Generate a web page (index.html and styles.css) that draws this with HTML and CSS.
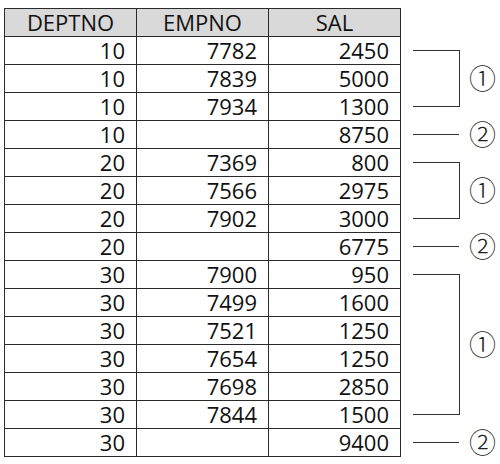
FILE: index.html
```html
<!DOCTYPE html>
<html lang="ko">
<head>
<meta charset="utf-8">
<link rel="stylesheet" href="styles.css">
</head>
<body>
<div class="wrap">
  <table class="data">
    <thead>
      <tr><th>DEPTNO</th><th>EMPNO</th><th>SAL</th></tr>
    </thead>
    <tbody>
      <tr><td>10</td><td>7782</td><td>2450</td></tr>
      <tr><td>10</td><td>7839</td><td>5000</td></tr>
      <tr><td>10</td><td>7934</td><td>1300</td></tr>
      <tr><td>10</td><td></td><td>8750</td></tr>
      <tr><td>20</td><td>7369</td><td>800</td></tr>
      <tr><td>20</td><td>7566</td><td>2975</td></tr>
      <tr><td>20</td><td>7902</td><td>3000</td></tr>
      <tr><td>20</td><td></td><td>6775</td></tr>
      <tr><td>30</td><td>7900</td><td>950</td></tr>
      <tr><td>30</td><td>7499</td><td>1600</td></tr>
      <tr><td>30</td><td>7521</td><td>1250</td></tr>
      <tr><td>30</td><td>7654</td><td>1250</td></tr>
      <tr><td>30</td><td>7698</td><td>2850</td></tr>
      <tr><td>30</td><td>7844</td><td>1500</td></tr>
      <tr><td>30</td><td></td><td>9400</td></tr>
    </tbody>
  </table>
  <div class="notes">
    <div class="bracket g1"></div><div class="mark g1">①</div>
    <div class="line r4"></div><div class="mark r4">②</div>
    <div class="bracket g2"></div><div class="mark g2">①</div>
    <div class="line r8"></div><div class="mark r8">②</div>
    <div class="bracket g3"></div><div class="mark g3">①</div>
    <div class="line r15"></div><div class="mark r15">②</div>
  </div>
</div>
</body>
</html>
```
FILE: styles.css
```css
html, body { margin: 0; padding: 0; background: #fff; }
body { font-family: "Open Sans", "Noto Sans CJK KR", sans-serif; color: #111; }
.wrap { display: flex; padding: 8px 0 0 4px; }
.data { border-collapse: collapse; font-size: 22px; }
.data th, .data td {
  border: 1px solid #2a2a2a;
  width: 132px;
  height: 27px;
  padding: 0 11px 0 0;
  line-height: 27px;
  box-sizing: border-box;
  font-weight: normal;
}
.data th { background: #d9d9d9; text-align: center; padding: 0; }
.data td { text-align: right; }
.notes {
  display: grid;
  grid-template-columns: 12px 47px 37px;
  grid-template-rows: repeat(16, 28px);
}
.bracket {
  grid-column: 2;
  border: 1px solid #333;
  border-left: none;
  margin: 14px 0 13px 0;
}
.line {
  grid-column: 2;
  align-self: center;
  border-top: 1px solid #333;
  margin-right: 1px;
}
.mark {
  grid-column: 3;
  align-self: center;
  padding-left: 9px;
  font-family: "Noto Sans CJK KR", sans-serif;
  font-weight: 300;
  font-size: 27px;
  line-height: 28px;
  color: #222;
}
.g1 { grid-row: 2 / 5; }
.r4 { grid-row: 5; }
.g2 { grid-row: 6 / 9; }
.r8 { grid-row: 9; }
.g3 { grid-row: 10 / 16; }
.r15 { grid-row: 16; }
```
